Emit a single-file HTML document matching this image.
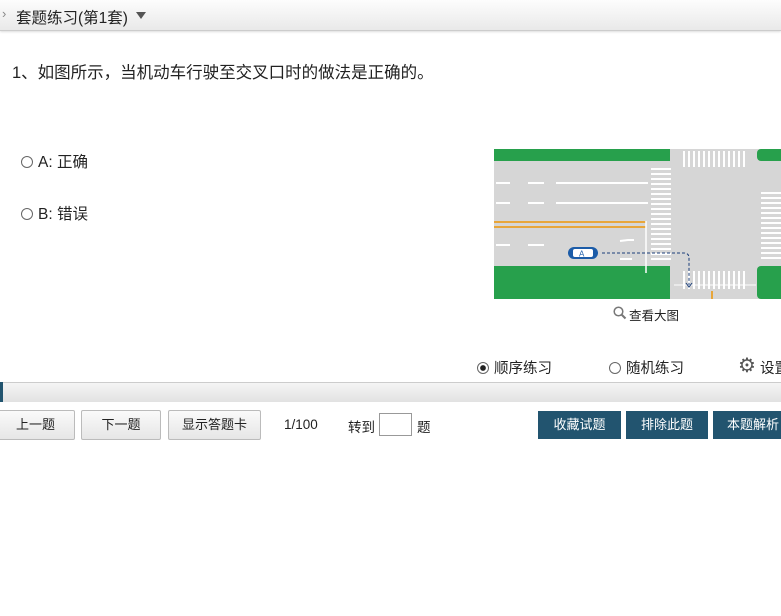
<!DOCTYPE html>
<html><head><meta charset="utf-8"><style>
body{margin:0;width:781px;height:616px;overflow:hidden;background:#fff;font-family:"Liberation Sans","Noto Sans CJK SC",sans-serif;color:#222;position:relative}
.a{position:absolute;white-space:nowrap}
.hdr{left:0;top:0;width:781px;height:30px;background:linear-gradient(#fdfdfd,#e9e9e9);border-bottom:1px solid #ccc;box-shadow:0 1px 2px #ddd}
.btn{position:absolute;top:410px;height:28px;border:1px solid #bbb;border-radius:2px;background:linear-gradient(#fafafa,#e6e6e6);font-size:13px;line-height:28px;text-align:center}
.dbtn{position:absolute;top:411px;height:28px;background:#22546f;color:#fff;font-size:13px;line-height:28px;text-align:center}
.rad{display:inline-block;width:10px;height:10px;border:1px solid #666;border-radius:50%;vertical-align:-1px;margin-right:5px;position:relative}
</style></head><body>
<div class="a hdr"></div>
<div class="a" style="left:2px;top:6px;font-size:13px;color:#888">›</div>
<div class="a" style="left:16px;top:6px;font-size:15.5px">套题练习(第1套)</div>
<div class="a" style="left:136px;top:12px;width:0;height:0;border-left:5px solid transparent;border-right:5px solid transparent;border-top:7px solid #555"></div>
<div class="a" style="left:12px;top:59px;font-size:16.5px">1、如图所示，当机动车行驶至交叉口时的做法是正确的。</div>
<div class="a" style="left:21px;top:150px;font-size:15.5px"><span class="rad"></span>A: 正确</div>
<div class="a" style="left:21px;top:202px;font-size:15.5px"><span class="rad"></span>B: 错误</div>
<svg class="a" style="left:494px;top:149px" width="287" height="150" viewBox="0 0 287 150">
<rect width="287" height="150" fill="#d6d6d6"/>
<rect x="0" y="0" width="176" height="12" fill="#27a04c"/>
<rect x="263" y="0" width="30" height="12" rx="4" fill="#27a04c"/>
<rect x="0" y="117" width="176" height="33" fill="#27a04c"/>
<rect x="263" y="117" width="30" height="33" rx="4" fill="#27a04c"/>
<g stroke="#fff" stroke-width="2">
<path d="M2 34h14M34 34h16M62 34h92M2 54h14M34 54h16M62 54h92M2 96h14M34 96h16" />
</g>
<path d="M0 73h152M0 78h152" stroke="#e8a63a" stroke-width="2"/>
<path d="M152 72v52" stroke="#fff" stroke-width="1.5"/>
<g stroke="#fff" stroke-width="2">
<path d="M157 20h20M157 25h20M157 30h20M157 35h20M157 40h20M157 45h20M157 50h20M157 55h20M157 60h20M157 65h20M157 70h20M157 75h20M157 80h20M157 85h20M157 90h20M157 95h20M157 100h20M157 105h20M157 110h20"/>
<path d="M267 44h20M267 49h20M267 54h20M267 59h20M267 64h20M267 69h20M267 74h20M267 79h20M267 84h20M267 89h20M267 94h20M267 99h20M267 104h20M267 109h20"/>
<path d="M190 2v16M195 2v16M200 2v16M205 2v16M210 2v16M215 2v16M220 2v16M225 2v16M230 2v16M235 2v16M240 2v16M245 2v16M250 2v16"/>
<path d="M190 122v18M195 122v18M200 122v18M205 122v18M210 122v18M215 122v18M220 122v18M225 122v18M230 122v18M235 122v18M240 122v18M245 122v18M250 122v18"/>
</g>
<path d="M180 136h82" stroke="#fff" stroke-width="1"/>
<path d="M218 142v8" stroke="#e8a63a" stroke-width="2"/>
<path d="M126 92l8-1 6 0" stroke="#fff" stroke-width="2" fill="none"/>
<path d="M126 110h12" stroke="#fff" stroke-width="2"/>
<rect x="74" y="98" width="30" height="12" rx="6" fill="#1c5ca8"/>
<rect x="79" y="100" width="20" height="8" rx="2" fill="#fff"/>
<text x="85" y="107.5" font-size="8" fill="#1c5ca8" font-family="Liberation Sans">A</text>
<path d="M108 104h82q5 0 5 5v27" stroke="#1c3f7a" stroke-width="1" stroke-dasharray="3 2" fill="none"/>
<path d="M192 134l3 4 3-4" stroke="#1c3f7a" fill="none"/>
</svg>
<svg class="a" style="left:613px;top:306px" width="14" height="14"><circle cx="5.5" cy="5.5" r="4.3" stroke="#777" stroke-width="1.5" fill="none"/><path d="M8.5 8.5l4 4" stroke="#777" stroke-width="2"/></svg>
<div class="a" style="left:629px;top:305px;font-size:12.5px">查看大图</div>
<div class="a" style="left:477px;top:357px;font-size:14.5px"><span class="rad" style="background:radial-gradient(#222 35%,#fff 45%)"></span>顺序练习</div>
<div class="a" style="left:609px;top:357px;font-size:14.5px"><span class="rad"></span>随机练习</div>
<div class="a" style="left:738px;top:353px;font-size:20px;color:#555">⚙</div>
<div class="a" style="left:760px;top:357px;font-size:14.5px">设置</div>
<div class="a" style="left:0;top:382px;width:781px;height:19px;background:linear-gradient(#f5f5f5,#e2e2e2);border-top:1px solid #ccc"></div>
<div class="a" style="left:0;top:382px;width:3px;height:20px;background:#22546f"></div>
<div class="btn" style="left:-4px;width:77px">上一题</div>
<div class="btn" style="left:81px;width:78px">下一题</div>
<div class="btn" style="left:168px;width:91px">显示答题卡</div>
<div class="a" style="left:284px;top:417px;font-size:13.5px">1/100</div>
<div class="a" style="left:348px;top:416px;font-size:13.5px">转到</div>
<div class="a" style="left:379px;top:413px;width:31px;height:21px;border:1px solid #999;background:#fff"></div>
<div class="a" style="left:417px;top:416px;font-size:13.5px">题</div>
<div class="dbtn" style="left:538px;width:83px">收藏试题</div>
<div class="dbtn" style="left:626px;width:82px">排除此题</div>
<div class="dbtn" style="left:713px;width:80px">本题解析</div>
</body></html>
